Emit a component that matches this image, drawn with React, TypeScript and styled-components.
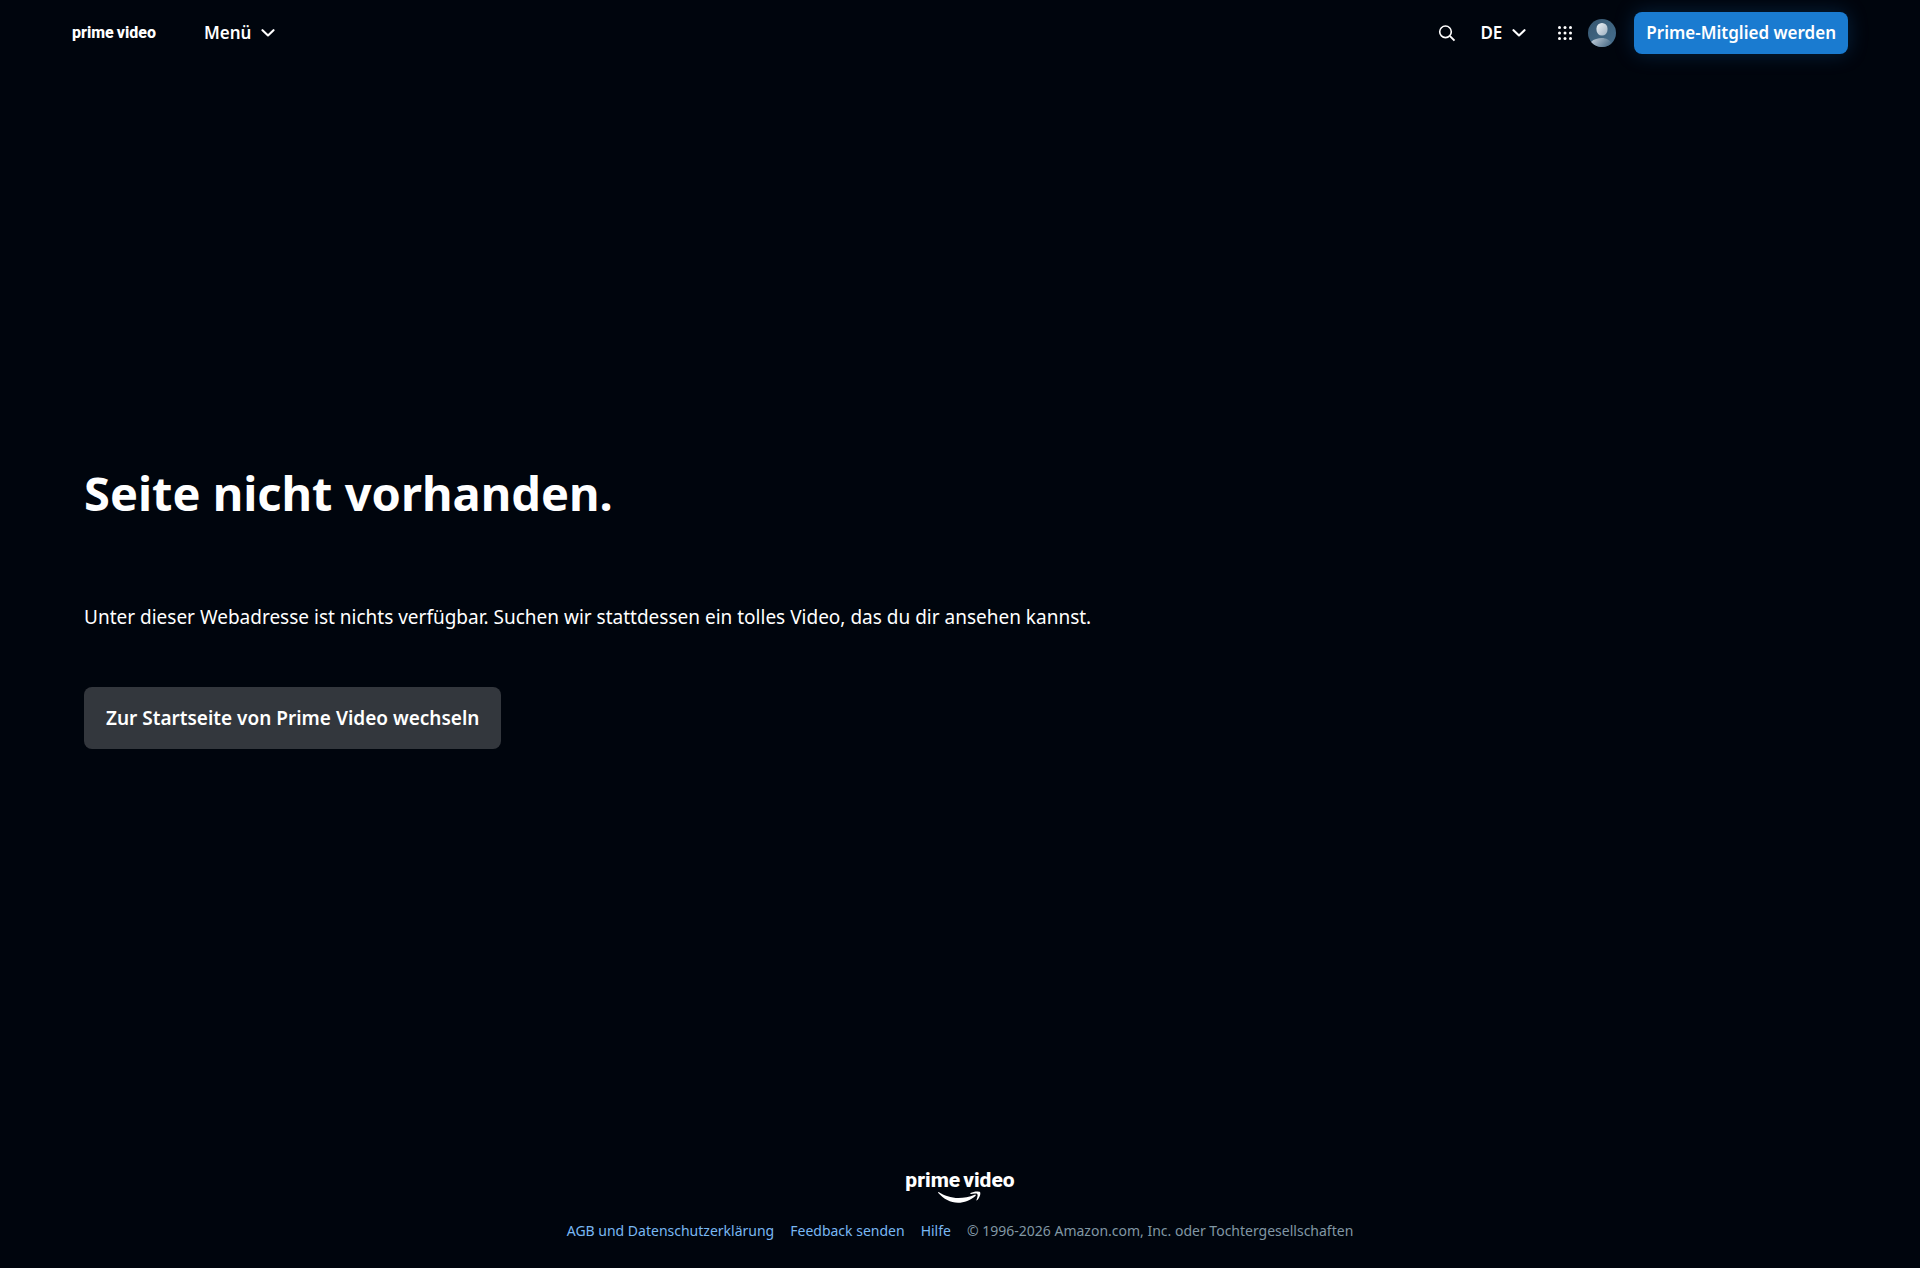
import React from "react";
import styled, { createGlobalStyle } from "styled-components";

const GlobalStyle = createGlobalStyle`
  * { box-sizing: border-box; }
  body {
    margin: 0;
    background: #00050d;
    color: #fff;
    font-family: "Noto Sans", "Open Sans", sans-serif;
  }
`;

const Page = styled.div`
  display: flex;
  flex-direction: column;
  min-height: 100vh;
`;

const Header = styled.header`
  display: flex;
  align-items: center;
  justify-content: space-between;
  height: 66px;
  padding: 0 72px;
`;

const Nav = styled.nav`
  display: flex;
  align-items: center;
  gap: 48px;
`;

const Wordmark = styled.a<{ $size: number }>`
  display: flex;
  gap: 3px;
  color: #fff;
  font-family: Roboto, "Liberation Sans", sans-serif;
  font-size: ${(p) => p.$size}px;
  font-weight: 800;
  line-height: 22px;
  text-decoration: none;
  white-space: nowrap;
`;

const Tools = styled.div`
  display: flex;
  align-items: center;
`;

const MenuButton = styled.button`
  display: flex;
  align-items: center;
  gap: 10px;
  padding: 0;
  border: 0;
  background: none;
  color: #fff;
  font: 600 17px/24px "Noto Sans", "Open Sans", sans-serif;
  cursor: pointer;
`;

const IconButton = styled.button`
  display: flex;
  padding: 0;
  border: 0;
  background: none;
  color: #fff;
  cursor: pointer;
`;

const SearchSlot = styled.div`
  margin-right: 24px;
`;

const GridSlot = styled.div`
  margin: 0 16px 0 32px;
`;

const JoinLink = styled.a`
  margin-left: 18px;
  padding: 9px 12px;
  border-radius: 8px;
  background: #1a7bd0;
  box-shadow: 0 0 20px rgba(26, 123, 208, 0.25);
  color: #fff;
  font-size: 17px;
  font-weight: 600;
  line-height: 24px;
  text-decoration: none;
  white-space: nowrap;
`;

const Main = styled.main`
  display: flex;
  flex: 1;
  flex-direction: column;
  align-items: flex-start;
  padding: 391px 84px 48px;
`;

const Title = styled.h1`
  margin: 0;
  font-size: 47px;
  font-weight: 700;
  line-height: 72px;
`;

const Message = styled.p`
  margin: 72px 0 54px;
  font-size: 19px;
  line-height: 32px;
`;

const HomeLink = styled.a`
  padding: 15px 22px;
  border-radius: 8px;
  background: #33373d;
  color: #fff;
  font-size: 19px;
  font-weight: 600;
  line-height: 32px;
  text-decoration: none;
`;

const Footer = styled.footer`
  display: flex;
  flex-direction: column;
  align-items: center;
  gap: 16px;
  padding-bottom: 25px;
`;

const Brand = styled.div`
  display: flex;
  flex-direction: column;
  align-items: center;
`;

const Legal = styled.div`
  display: flex;
  flex-wrap: wrap;
  justify-content: center;
  gap: 0 16px;
  color: #8197a4;
  font-size: 14px;
  line-height: 24px;
`;

const LegalLink = styled.a`
  color: #79b8f3;
  text-decoration: none;
`;

const Chevron = () => (
  <svg width="14" height="8" viewBox="0 0 14 8" fill="none" aria-hidden="true">
    <path d="M1.5 1.2 7 6.5l5.500-5.300" stroke="currentColor" strokeWidth="2.100" strokeLinecap="round" strokeLinejoin="round" />
  </svg>
);

const SearchIcon = () => (
  <svg width="18" height="18" viewBox="0 0 18 18" fill="none" aria-hidden="true">
    <circle cx="7.500" cy="7.800" r="5.800" stroke="currentColor" strokeWidth="1.600" />
    <path d="m12 12.100 4.500 4.500" stroke="currentColor" strokeWidth="1.900" />
  </svg>
);

const dots = [1.5, 7, 12.5];

const AppsIcon = () => (
  <svg width="14" height="14" viewBox="0 0 14 14" fill="currentColor" aria-hidden="true">
    {dots.map((y) => dots.map((x) => <circle key={`${x}-${y}`} cx={x} cy={y} r="1.500" />))}
  </svg>
);

const Avatar = () => (
  <svg width="28" height="28" viewBox="0 0 28 28" aria-hidden="true">
    <defs>
      <linearGradient id="head" x1="0" y1="0" x2="1" y2="1">
        <stop offset="0" stopColor="#f0f4f7" />
        <stop offset="1" stopColor="#9db0c1" />
      </linearGradient>
      <linearGradient id="body" x1="0" y1="0" x2="1" y2="0.500">
        <stop offset="0" stopColor="#c9d4dd" />
        <stop offset="1" stopColor="#496b87" />
      </linearGradient>
      <linearGradient id="back" x1="0" y1="0" x2="1" y2="1">
        <stop offset="0" stopColor="#36566f" />
        <stop offset="1" stopColor="#47708f" />
      </linearGradient>
      <clipPath id="disc"><circle cx="14" cy="14" r="14" /></clipPath>
    </defs>
    <g clipPath="url(#disc)">
      <rect width="28" height="28" fill="url(#back)" />
      <path d="M3 23c3-3 7-4 11-4s8 2 10 6v5H3z" fill="url(#body)" />
      <rect x="8.500" y="4" width="11" height="12.500" rx="5.400" fill="url(#head)" />
    </g>
  </svg>
);

const Smile = () => (
  <svg width="44" height="12" viewBox="0 0 44 12" fill="#fff" aria-hidden="true">
    <path d="M.6 1C6 4.500 13 7 20.500 7c5.200 0 11-1.100 16.200-3.300.9-.4 1.600.5.700 1.200C32.800 9 26 11.700 20 11.700 12.500 11.700 5.500 7.800.3 1.900c-.4-.5 0-1.200.3-.9z" />
    <path d="M32.500 2.100C35.500.1 41 .1 42 1c1 1.300-.3 6.200-3 8.300-.4.300-.8.200-.6-.3.600-1.500 1.700-4.900 1-5.800-.8-1-4.400-.5-6.400-.2-.7.100-.9-.4-.5-.9z" />
  </svg>
);

export default function App() {
  return (
    <Page>
      <GlobalStyle />
      <Header>
        <Nav aria-label="Hauptnavigation">
          <Wordmark href="#" $size={16}><span>prime</span> <span>video</span></Wordmark>
          <MenuButton type="button">Menü<Chevron /></MenuButton>
        </Nav>
        <Tools>
          <SearchSlot>
            <IconButton type="button" aria-label="Suche"><SearchIcon /></IconButton>
          </SearchSlot>
          <MenuButton type="button">DE<Chevron /></MenuButton>
          <GridSlot>
            <IconButton type="button" aria-label="Apps"><AppsIcon /></IconButton>
          </GridSlot>
          <IconButton type="button" aria-label="Konto"><Avatar /></IconButton>
          <JoinLink href="#">Prime-Mitglied werden</JoinLink>
        </Tools>
      </Header>
      <Main>
        <Title>Seite nicht vorhanden.</Title>
        <Message>
          Unter dieser Webadresse ist nichts verfügbar. Suchen wir stattdessen ein tolles Video, das du dir ansehen kannst.
        </Message>
        <HomeLink href="#">Zur Startseite von Prime Video wechseln</HomeLink>
      </Main>
      <Footer>
        <Brand>
          <Wordmark href="#" $size={21}><span>prime</span> <span>video</span></Wordmark>
          <Smile />
        </Brand>
        <Legal>
          <LegalLink href="#">AGB und Datenschutzerklärung</LegalLink>
          <LegalLink href="#">Feedback senden</LegalLink>
          <LegalLink href="#">Hilfe</LegalLink>
          <span>© 1996-2026 Amazon.com, Inc. oder Tochtergesellschaften</span>
        </Legal>
      </Footer>
    </Page>
  );
}
